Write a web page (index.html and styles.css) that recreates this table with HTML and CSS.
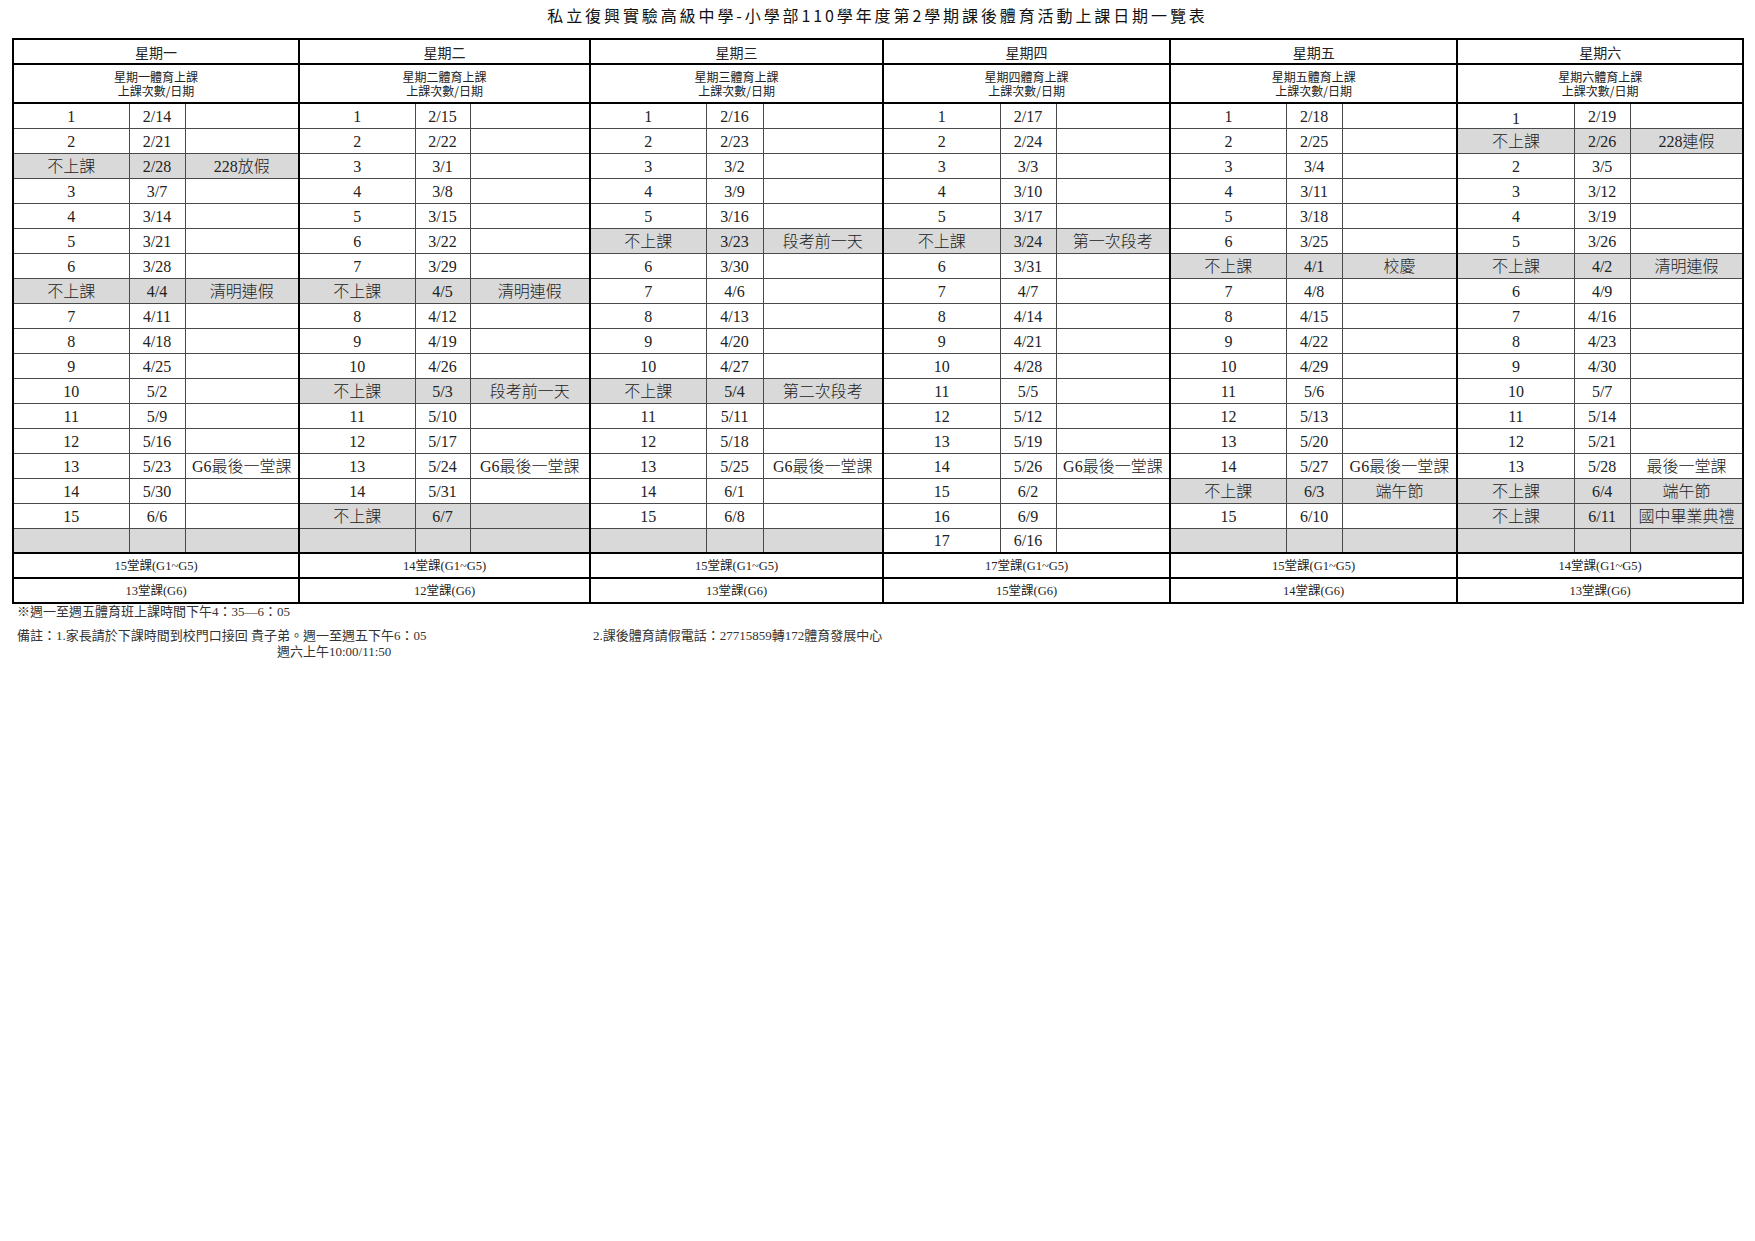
FILE: index.html
```html
<!DOCTYPE html>
<html lang="zh-Hant">
<head>
<meta charset="utf-8">
<title>課後體育活動上課日期一覽表</title>
<link rel="stylesheet" href="styles.css">
</head>
<body>
<div class="page">
  <h1 class="title">私立復興實驗高級中學-小學部110學年度第2學期課後體育活動上課日期一覽表</h1>
  <table class="sched">
    <colgroup class="grp"><col class="w116"><col class="w56"><col class="w114"></colgroup>
    <colgroup class="grp"><col class="w116"><col class="w55"><col class="w120"></colgroup>
    <colgroup class="grp"><col class="w116"><col class="w57"><col class="w120"></colgroup>
    <colgroup class="grp"><col class="w117"><col class="w56"><col class="w114"></colgroup>
    <colgroup class="grp"><col class="w116"><col class="w56"><col class="w115"></colgroup>
    <colgroup class="grp"><col class="w117"><col class="w56"><col class="w113"></colgroup>
    <thead>
      <tr class="hd">
        <th colspan="3">星期一</th><th colspan="3">星期二</th><th colspan="3">星期三</th><th colspan="3">星期四</th><th colspan="3">星期五</th><th colspan="3">星期六</th>
      </tr>
      <tr class="sub">
        <th colspan="3">星期一體育上課<br>上課次數/日期</th>
        <th colspan="3">星期二體育上課<br>上課次數/日期</th>
        <th colspan="3">星期三體育上課<br>上課次數/日期</th>
        <th colspan="3">星期四體育上課<br>上課次數/日期</th>
        <th colspan="3">星期五體育上課<br>上課次數/日期</th>
        <th colspan="3">星期六體育上課<br>上課次數/日期</th>
      </tr>
    </thead>
    <tbody class="data">
      <tr><td>1</td><td>2/14</td><td></td><td>1</td><td>2/15</td><td></td><td>1</td><td>2/16</td><td></td><td>1</td><td>2/17</td><td></td><td>1</td><td>2/18</td><td></td><td class="lo">1</td><td>2/19</td><td></td></tr>
      <tr><td>2</td><td>2/21</td><td></td><td>2</td><td>2/22</td><td></td><td>2</td><td>2/23</td><td></td><td>2</td><td>2/24</td><td></td><td>2</td><td>2/25</td><td></td><td class="g">不上課</td><td class="g">2/26</td><td class="g">228連假</td></tr>
      <tr><td class="g">不上課</td><td class="g">2/28</td><td class="g">228放假</td><td>3</td><td>3/1</td><td></td><td>3</td><td>3/2</td><td></td><td>3</td><td>3/3</td><td></td><td>3</td><td>3/4</td><td></td><td>2</td><td>3/5</td><td></td></tr>
      <tr><td>3</td><td>3/7</td><td></td><td>4</td><td>3/8</td><td></td><td>4</td><td>3/9</td><td></td><td>4</td><td>3/10</td><td></td><td>4</td><td>3/11</td><td></td><td>3</td><td>3/12</td><td></td></tr>
      <tr><td>4</td><td>3/14</td><td></td><td>5</td><td>3/15</td><td></td><td>5</td><td>3/16</td><td></td><td>5</td><td>3/17</td><td></td><td>5</td><td>3/18</td><td></td><td>4</td><td>3/19</td><td></td></tr>
      <tr><td>5</td><td>3/21</td><td></td><td>6</td><td>3/22</td><td></td><td class="g">不上課</td><td class="g">3/23</td><td class="g">段考前一天</td><td class="g">不上課</td><td class="g">3/24</td><td class="g">第一次段考</td><td>6</td><td>3/25</td><td></td><td>5</td><td>3/26</td><td></td></tr>
      <tr><td>6</td><td>3/28</td><td></td><td>7</td><td>3/29</td><td></td><td>6</td><td>3/30</td><td></td><td>6</td><td>3/31</td><td></td><td class="g">不上課</td><td class="g">4/1</td><td class="g">校慶</td><td class="g">不上課</td><td class="g">4/2</td><td class="g">清明連假</td></tr>
      <tr><td class="g">不上課</td><td class="g">4/4</td><td class="g">清明連假</td><td class="g">不上課</td><td class="g">4/5</td><td class="g">清明連假</td><td>7</td><td>4/6</td><td></td><td>7</td><td>4/7</td><td></td><td>7</td><td>4/8</td><td></td><td>6</td><td>4/9</td><td></td></tr>
      <tr><td>7</td><td>4/11</td><td></td><td>8</td><td>4/12</td><td></td><td>8</td><td>4/13</td><td></td><td>8</td><td>4/14</td><td></td><td>8</td><td>4/15</td><td></td><td>7</td><td>4/16</td><td></td></tr>
      <tr><td>8</td><td>4/18</td><td></td><td>9</td><td>4/19</td><td></td><td>9</td><td>4/20</td><td></td><td>9</td><td>4/21</td><td></td><td>9</td><td>4/22</td><td></td><td>8</td><td>4/23</td><td></td></tr>
      <tr><td>9</td><td>4/25</td><td></td><td>10</td><td>4/26</td><td></td><td>10</td><td>4/27</td><td></td><td>10</td><td>4/28</td><td></td><td>10</td><td>4/29</td><td></td><td>9</td><td>4/30</td><td></td></tr>
      <tr><td>10</td><td>5/2</td><td></td><td class="g">不上課</td><td class="g">5/3</td><td class="g">段考前一天</td><td class="g">不上課</td><td class="g">5/4</td><td class="g">第二次段考</td><td>11</td><td>5/5</td><td></td><td>11</td><td>5/6</td><td></td><td>10</td><td>5/7</td><td></td></tr>
      <tr><td>11</td><td>5/9</td><td></td><td>11</td><td>5/10</td><td></td><td>11</td><td>5/11</td><td></td><td>12</td><td>5/12</td><td></td><td>12</td><td>5/13</td><td></td><td>11</td><td>5/14</td><td></td></tr>
      <tr><td>12</td><td>5/16</td><td></td><td>12</td><td>5/17</td><td></td><td>12</td><td>5/18</td><td></td><td>13</td><td>5/19</td><td></td><td>13</td><td>5/20</td><td></td><td>12</td><td>5/21</td><td></td></tr>
      <tr><td>13</td><td>5/23</td><td>G6最後一堂課</td><td>13</td><td>5/24</td><td>G6最後一堂課</td><td>13</td><td>5/25</td><td>G6最後一堂課</td><td>14</td><td>5/26</td><td>G6最後一堂課</td><td>14</td><td>5/27</td><td>G6最後一堂課</td><td>13</td><td>5/28</td><td>最後一堂課</td></tr>
      <tr><td>14</td><td>5/30</td><td></td><td>14</td><td>5/31</td><td></td><td>14</td><td>6/1</td><td></td><td>15</td><td>6/2</td><td></td><td class="g">不上課</td><td class="g">6/3</td><td class="g">端午節</td><td class="g">不上課</td><td class="g">6/4</td><td class="g">端午節</td></tr>
      <tr><td>15</td><td>6/6</td><td></td><td class="g">不上課</td><td class="g">6/7</td><td class="g"></td><td>15</td><td>6/8</td><td></td><td>16</td><td>6/9</td><td></td><td>15</td><td>6/10</td><td></td><td class="g">不上課</td><td class="g">6/11</td><td class="g">國中畢業典禮</td></tr>
      <tr><td class="g"></td><td class="g"></td><td class="g"></td><td class="g"></td><td class="g"></td><td class="g"></td><td class="g"></td><td class="g"></td><td class="g"></td><td>17</td><td>6/16</td><td></td><td class="g"></td><td class="g"></td><td class="g"></td><td class="g"></td><td class="g"></td><td class="g"></td></tr>
    </tbody>
    <tbody class="sum">
      <tr><td colspan="3">15堂課(G1~G5)</td><td colspan="3">14堂課(G1~G5)</td><td colspan="3">15堂課(G1~G5)</td><td colspan="3">17堂課(G1~G5)</td><td colspan="3">15堂課(G1~G5)</td><td colspan="3">14堂課(G1~G5)</td></tr>
      <tr><td colspan="3">13堂課(G6)</td><td colspan="3">12堂課(G6)</td><td colspan="3">13堂課(G6)</td><td colspan="3">15堂課(G6)</td><td colspan="3">14堂課(G6)</td><td colspan="3">13堂課(G6)</td></tr>
    </tbody>
  </table>
  <div class="notes">
    <p class="note1">※週一至週五體育班上課時間下午4：35—6：05</p>
    <div class="note-row">
      <div class="note-left">
        <p>備註：1.家長請於下課時間到校門口接回 貴子弟。週一至週五下午6：05</p>
        <p class="sat">週六上午10:00/11:50</p>
      </div>
      <p class="note-right">2.課後體育請假電話：27715859轉172體育發展中心</p>
    </div>
  </div>
</div>
</body>
</html>
```

FILE: styles.css
```css
* { box-sizing: border-box; }

body {
  margin: 0;
  background: #fff;
  color: #1c1c1c;
}

.page {
  width: 1755px;
  padding: 3px 0 0 12px;
}

.title {
  margin: 0;
  width: 1731px;
  height: 24px;
  text-align: center;
  font: 400 16px/24px "Noto Sans CJK TC", sans-serif;
  letter-spacing: 2.9px;
  color: #111;
}

.sched {
  margin-top: 11px;
  width: 1731px;
  table-layout: fixed;
  border-collapse: collapse;
  border: 2px solid #000;
}

.grp {
  border-left: 2px solid #000;
  border-right: 2px solid #000;
}

.w55 { width: 55px; }
.w56 { width: 56px; }
.w57 { width: 57px; }
.w113 { width: 113px; }
.w114 { width: 114px; }
.w115 { width: 115px; }
.w116 { width: 116px; }
.w117 { width: 117px; }
.w120 { width: 120px; }

.sched th,
.sched td {
  padding: 0;
  text-align: center;
  vertical-align: middle;
  white-space: nowrap;
  overflow: hidden;
}

.hd th {
  height: 25px;
  border: 2px solid #000;
  font: 400 14px/16px "Noto Sans CJK TC", sans-serif;
  color: #222;
}

.sub th {
  height: 39px;
  border: 2px solid #000;
  font: 400 12px/14px "Noto Sans CJK TC", sans-serif;
  color: #222;
}

.data td {
  height: 25px;
  border: 1px solid #4a4a4a;
  font: 300 16px/18px "Liberation Serif", "Noto Sans CJK TC", serif;
  color: #222;
  padding-top: 2px;
}

.data td.g {
  background: #d9d9d9;
}

.data td.lo {
  vertical-align: bottom;
  padding: 0;
}

.sum td {
  height: 25px;
  border: 2px solid #000;
  font: 400 12.5px/14px "Liberation Serif", "Noto Sans CJK TC", serif;
  color: #222;
}

.notes {
  padding-left: 5px;
  font: 400 13px/16px "Liberation Serif", "Noto Sans CJK TC", serif;
  color: #333;
}

.notes p {
  margin: 0;
}

.note1 {
  margin-top: 3px;
}

.note-row {
  display: flex;
  margin-top: 8px;
}

.note-left {
  width: 576px;
  flex: none;
}

.sat {
  padding-left: 260px;
  margin-top: 2px;
}

.note-right {
  margin-top: -3px;
}
```
